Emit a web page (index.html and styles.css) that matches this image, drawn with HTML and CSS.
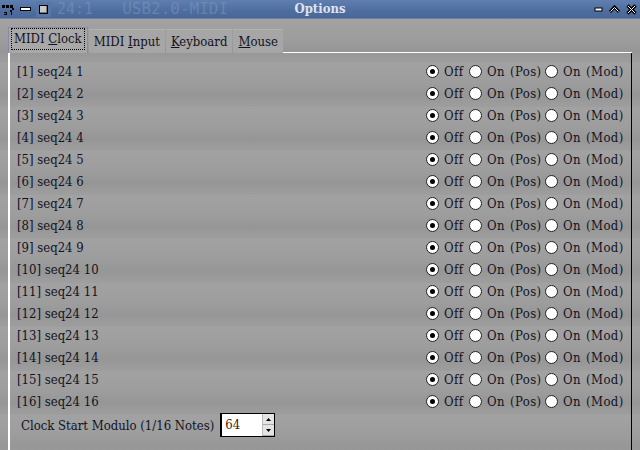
FILE: index.html
```html
<!DOCTYPE html>
<html>
<head>
<meta charset="utf-8">
<link rel="stylesheet" href="styles.css">
</head>
<body>
<div class="titlebar">
  <div class="tb-left">
    <svg class="ico-menu" width="12" height="10" viewBox="0 0 12 10"><g fill="#000"><rect x="0" y="0" width="3" height="3"/><rect x="4" y="0" width="3" height="3"/><rect x="8" y="0" width="3" height="3"/><rect x="10" y="3" width="2" height="2"/><rect x="8" y="5" width="2" height="2"/><rect x="2" y="7" width="3" height="1"/><rect x="2" y="9" width="3" height="1"/><rect x="4" y="7" width="1" height="3"/><rect x="9" y="7" width="1" height="3"/></g></svg>
    <span class="ico-bar"></span>
    <span class="ico-sq"></span>
    <span class="ghost g1">24:1</span>
    <span class="ghost g2">USB2.0-MIDI</span>
  </div>
  <div class="title">Options</div>
  <div class="tb-right">
    <svg width="9" height="9" viewBox="0 0 9 9"><rect x="1" y="3" width="7" height="3" fill="#fff" stroke="#000" stroke-width="1"/></svg>
    <svg width="11" height="9" viewBox="0 0 11 9"><path d="M1 7 L5.5 2 L10 7" fill="none" stroke="#000" stroke-width="3"/><path d="M1.5 6.5 L5.5 2.5 L9.5 6.5" fill="none" stroke="#fff" stroke-width="1"/></svg>
    <svg width="11" height="11" viewBox="0 0 11 11"><path d="M1.5 1.5 L9.5 9.5 M9.5 1.5 L1.5 9.5" stroke="#000" stroke-width="3.2"/><path d="M2 2 L9 9 M9 2 L2 9" stroke="#fff" stroke-width="1"/></svg>
  </div>
</div>
<div class="window">
  <div class="tabs">
    <div class="tab active"><span class="focus">MIDI <u>C</u>lock</span></div>
    <div class="tab">MIDI <u>I</u>nput</div>
    <div class="tab"><u>K</u>eyboard</div>
    <div class="tab"><u>M</u>ouse</div>
    <div class="tab-fill"></div>
  </div>
  <div class="panel">
    <div class="rows" id="rows"></div>
    <div class="modulo">
      <span class="mod-label">Clock Start Modulo (1/16 Notes)</span>
      <div class="spin">
        <span class="spin-val">64</span>
        <div class="spin-btns">
          <span class="spin-btn"><svg width="5" height="3" viewBox="0 0 5 3"><path d="M0 3 L2.5 0 L5 3Z" fill="#000"/></svg></span>
          <span class="spin-btn"><svg width="5" height="3" viewBox="0 0 5 3"><path d="M0 0 L2.5 3 L5 0Z" fill="#000"/></svg></span>
        </div>
      </div>
    </div>
  </div>
</div>
<script>
var rows = document.getElementById('rows');
var html = '';
for (var i = 1; i <= 16; i++) {
  html += '<div class="row"><span class="label">[' + i + '] seq24 ' + i + '</span>' +
    '<span class="opts"><span class="radio on"></span><span class="opt off">Off</span>' +
    '<span class="radio"></span><span class="opt pos">On (Pos)</span>' +
    '<span class="radio"></span><span class="opt mod">On (Mod)</span></span></div>';
}
rows.innerHTML = html;
</script>
</body>
</html>
```
FILE: styles.css
```css
html, body {
  margin: 0;
  padding: 0;
}
body {
  width: 640px;
  height: 450px;
  overflow: hidden;
  font-family: "DejaVu Serif", serif;
  font-stretch: condensed;
  font-size: 13px;
  color: #12121f;
  background: #9c9c9c;
}
.titlebar {
  height: 18px;
  background: linear-gradient(#5f7fb0, #4f6e9f 60%, #48679a);
  position: relative;
  display: flex;
  align-items: center;
  border-bottom: 1px solid #6e7f98;
}
.tb-left {
  display: flex;
  align-items: center;
  height: 18px;
  position: relative;
  z-index: 1;
}
.ico-menu {
  margin-left: 2px;
  margin-top: 2px;
}
.ico-bar {
  display: block;
  width: 9px;
  height: 2px;
  background: #fff;
  border: 1px solid #000;
  margin-left: 6px;
}
.ico-sq {
  display: block;
  width: 7px;
  height: 7px;
  background: #c8c8c8;
  border: 1px solid #000;
  box-shadow: inset -1px -1px 0 #777;
  margin-left: 8px;
  outline: 3px solid #5676a6;
}
.ghost {
  font-family: "DejaVu Sans Mono", monospace;
  font-size: 15px;
  line-height: 18px;
  color: rgba(125, 150, 190, 0.55);
  white-space: nowrap;
}
.g1 {
  margin-left: 9px;
}
.g2 {
  margin-left: 29px;
  font-size: 16px;
}
.title {
  position: absolute;
  left: 0;
  right: 0;
  top: 0;
  text-align: center;
  font-weight: bold;
  font-size: 13px;
  line-height: 18px;
  color: #dde3ee;
}
.tb-right {
  margin-left: auto;
  display: flex;
  align-items: center;
  gap: 6px;
  padding-right: 3px;
  position: relative;
  z-index: 1;
}
.window {
  padding-left: 8px;
  padding-right: 8px;
  background: repeating-linear-gradient(180deg, #a2a2a2 0px, #9d9d9d 20px, #969696 32px, #9e9e9e 44px);
}
.tabs {
  display: flex;
  align-items: flex-end;
  padding-top: 8px;
  height: 26px;
}
.tab {
  height: 24px;
  line-height: 24px;
  padding: 0 5px;
  background: #a6a6a6;
  border-top: 1px solid #b2b2b2;
  margin-right: 1px;
  box-sizing: border-box;
  white-space: nowrap;
}
.tab.active {
  height: 26px;
  line-height: 22px;
  padding: 0 2px;
  background: #a8a8a8;
  border: 1px solid #8a8aa8;
  border-bottom: none;
}
.focus {
  display: inline-block;
  line-height: 20px;
  padding: 0 2px;
  border: 1px dotted #000;
}
.tab-fill {
  flex: 1;
  height: 1px;
  background: #fff;
  margin-left: -1px;
}
.panel {
  border-left: 2px solid #fff;
  border-right: 1px solid #000;
  height: 400px;
  padding: 7px 10px 0 7px;
  box-sizing: border-box;
}
.row {
  display: flex;
  align-items: center;
  height: 22px;
}
.label {
  flex: 1;
}
.opts {
  display: flex;
  align-items: center;
}
.radio {
  width: 11px;
  height: 11px;
  border: 1px solid #222;
  border-radius: 50%;
  background: #fff;
  position: relative;
  margin-right: 5px;
  margin-left: 5px;
}
.radio.on::after {
  content: "";
  position: absolute;
  left: 3px;
  top: 3px;
  width: 5px;
  height: 5px;
  border-radius: 50%;
  background: #000;
}
.opt {
  white-space: nowrap;
  word-spacing: 1px;
  letter-spacing: 0.4px;
}
.opt.off {
  width: 20px;
}
.opt.pos {
  width: 53px;
}
.opt.mod {
  width: 58px;
}
.modulo {
  display: flex;
  align-items: center;
  height: 26px;
  padding-left: 4px;
}
.mod-label {
  margin-right: 6px;
}
.spin {
  display: flex;
  width: 55px;
  height: 24px;
  box-sizing: border-box;
  border: 1px solid #000;
  background: #fff;
}
.spin-val {
  flex: 1;
  line-height: 22px;
  padding-left: 3px;
  color: #4a1a06;
  border-left: 1px solid #000;
}
.spin-btns {
  width: 11px;
  display: flex;
  flex-direction: column;
  border-left: 1px solid #bbb;
}
.spin-btn {
  flex: 1;
  display: flex;
  align-items: center;
  justify-content: center;
  background: #e4e4e4;
  border-bottom: 1px solid #aaa;
}
```
